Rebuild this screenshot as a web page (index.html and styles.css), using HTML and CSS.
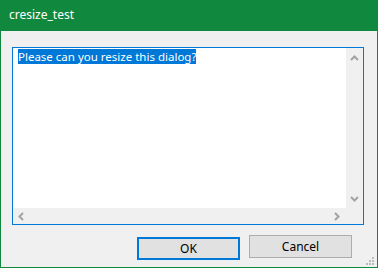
FILE: index.html
```html
<!DOCTYPE html>
<html>
<head>
    <title>cresize_test</title>
    <link rel="stylesheet" href="styles.css">
</head>
<body>
    <div class="window">
        <div class="titlebar">cresize_test</div>

        <div class="content">
            <div class="editbox">
                <div class="text-area">
                    <span class="selected">Please can you resize this dialog?</span>
                </div>
                <div class="vscroll">
                    <svg class="arrow" width="9" height="6" viewBox="0 0 9 6">
                        <path d="M1 5 L4.5 1.5 L8 5" fill="none" stroke="#a3a3a3" stroke-width="2"/>
                    </svg>
                    <svg class="arrow" width="9" height="6" viewBox="0 0 9 6">
                        <path d="M1 1 L4.5 4.5 L8 1" fill="none" stroke="#a3a3a3" stroke-width="2"/>
                    </svg>
                </div>
                <div class="hscroll">
                    <svg class="arrow" width="6" height="9" viewBox="0 0 6 9">
                        <path d="M5 1 L1.5 4.5 L5 8" fill="none" stroke="#a3a3a3" stroke-width="2"/>
                    </svg>
                    <svg class="arrow" width="6" height="9" viewBox="0 0 6 9">
                        <path d="M1 1 L4.5 4.5 L1 8" fill="none" stroke="#a3a3a3" stroke-width="2"/>
                    </svg>
                </div>
                <div class="corner"></div>
            </div>

            <div class="buttons">
                <button class="btn btn-default">OK</button>
                <button class="btn">Cancel</button>
            </div>

            <svg class="grip" width="9" height="9" viewBox="0 0 9 9">
                <rect x="6" y="0" width="2" height="2" fill="#bcbcbc"/>
                <rect x="3" y="3" width="2" height="2" fill="#bcbcbc"/>
                <rect x="6" y="3" width="2" height="2" fill="#bcbcbc"/>
                <rect x="0" y="6" width="2" height="2" fill="#bcbcbc"/>
                <rect x="3" y="6" width="2" height="2" fill="#bcbcbc"/>
                <rect x="6" y="6" width="2" height="2" fill="#bcbcbc"/>
            </svg>
        </div>
    </div>
</body>
</html>
```

FILE: styles.css
```css
body {
    margin: 0;
    font-family: "Noto Sans", "DejaVu Sans", sans-serif;
    font-size: 12px;
}

.window {
    width: 378px;
    height: 268px;
    box-sizing: border-box;
    border: 1px solid #10893e;
    border-top: none;
    display: flex;
    flex-direction: column;
    background-color: #f0f0f0;
}

.titlebar {
    height: 31px;
    margin: 0 -1px;
    padding-left: 9px;
    background-color: #10893e;
    color: white;
    line-height: 30px;
}

.content {
    position: relative;
    flex: 1;
    padding: 16px 0 0 11px;
}

/* Edit control with both scrollbars */
.editbox {
    width: 352px;
    height: 178px;
    box-sizing: border-box;
    border: 1px solid #0078d7;
    background-color: white;
    display: grid;
    grid-template-columns: 1fr 17px;
    grid-template-rows: 1fr 16px;
}

.text-area {
    padding: 1px 0 0 5px;
    font-size: 11.5px;
    line-height: 15px;
}

.selected {
    background-color: #0078d7;
    color: white;
}

.vscroll {
    background-color: #f0f0f0;
    display: flex;
    flex-direction: column;
    justify-content: space-between;
    align-items: center;
    padding: 7px 0 6px;
}

.hscroll {
    background-color: #f0f0f0;
    display: flex;
    justify-content: space-between;
    align-items: center;
    padding: 0 6px 0 5px;
}

.corner {
    background-color: #f0f0f0;
}

.arrow {
    display: block;
}

.buttons {
    display: flex;
    justify-content: flex-end;
    align-items: flex-start;
    gap: 9px;
    margin-top: 10px;
    padding-right: 25px;
}

.btn {
    width: 103px;
    height: 23px;
    box-sizing: border-box;
    border: 1px solid #adadad;
    background-color: #e1e1e1;
    font-family: inherit;
    font-size: 12px;
    color: black;
    padding: 0;
}

.btn-default {
    margin-top: 2px;
    border: 2px solid #0078d7;
}

.grip {
    position: absolute;
    right: 2px;
    bottom: 1px;
}
```
